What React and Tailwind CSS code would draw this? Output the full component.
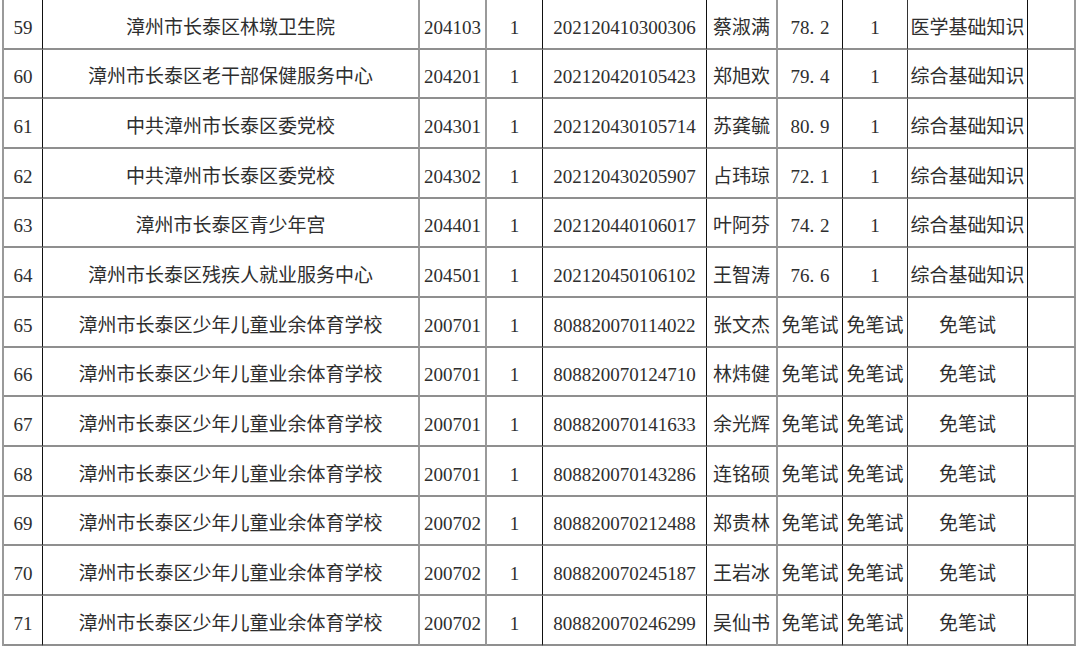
const rows = [
  ["59", "漳州市长泰区林墩卫生院", "204103", "1", "202120410300306", "蔡淑满", "78.2", "1", "医学基础知识"],
  ["60", "漳州市长泰区老干部保健服务中心", "204201", "1", "202120420105423", "郑旭欢", "79.4", "1", "综合基础知识"],
  ["61", "中共漳州市长泰区委党校", "204301", "1", "202120430105714", "苏龚毓", "80.9", "1", "综合基础知识"],
  ["62", "中共漳州市长泰区委党校", "204302", "1", "202120430205907", "占玮琼", "72.1", "1", "综合基础知识"],
  ["63", "漳州市长泰区青少年宫", "204401", "1", "202120440106017", "叶阿芬", "74.2", "1", "综合基础知识"],
  ["64", "漳州市长泰区残疾人就业服务中心", "204501", "1", "202120450106102", "王智涛", "76.6", "1", "综合基础知识"],
  ["65", "漳州市长泰区少年儿童业余体育学校", "200701", "1", "808820070114022", "张文杰", "免笔试", "免笔试", "免笔试"],
  ["66", "漳州市长泰区少年儿童业余体育学校", "200701", "1", "808820070124710", "林炜健", "免笔试", "免笔试", "免笔试"],
  ["67", "漳州市长泰区少年儿童业余体育学校", "200701", "1", "808820070141633", "余光辉", "免笔试", "免笔试", "免笔试"],
  ["68", "漳州市长泰区少年儿童业余体育学校", "200701", "1", "808820070143286", "连铭硕", "免笔试", "免笔试", "免笔试"],
  ["69", "漳州市长泰区少年儿童业余体育学校", "200702", "1", "808820070212488", "郑贵林", "免笔试", "免笔试", "免笔试"],
  ["70", "漳州市长泰区少年儿童业余体育学校", "200702", "1", "808820070245187", "王岩冰", "免笔试", "免笔试", "免笔试"],
  ["71", "漳州市长泰区少年儿童业余体育学校", "200702", "1", "808820070246299", "吴仙书", "免笔试", "免笔试", "免笔试"],
];

const borderR = [
  "border-r border-r-[#111]",
  "border-r-2 border-r-[#9a9a9a]",
  "border-r-2 border-r-[#9a9a9a]",
  "border-r border-r-[#111]",
  "border-r border-r-[#111]",
  "border-r-2 border-r-[#9a9a9a]",
  "border-r border-r-[#111]",
  "border-r border-r-[#333]",
  "border-r border-r-[#111]",
  "border-r-2 border-r-[#9a9a9a]",
];

function Score({ v }) {
  if (!v.includes(".")) return v;
  const [a, b] = v.split(".");
  return (
    <span>
      {a}
      <span className="inline-block w-[0.55em] text-left">.</span>
      {b}
    </span>
  );
}

export default function App() {
  return (
    <div className="w-[1080px] h-[649px] bg-white overflow-hidden">
      <div
        className="ml-[2px] w-[1074px] border-l-2 border-l-[#9a9a9a] grid grid-cols-[39px_377px_67px_56px_164px_71px_65px_65px_120px_48px] auto-rows-[49.67px] text-[19px] leading-none text-[#2e2e2e]"
        style={{ fontFamily: '"Liberation Serif", "Noto Sans CJK SC", serif' }}
      >
        {rows.map((r) =>
          [...r, ""].map((c, i) => (
            <div
              key={r[0] + "-" + i}
              className={`flex items-center justify-center whitespace-nowrap pt-[7px] border-b-2 border-b-[#8f8f8f] ${borderR[i]}`}
            >
              {i === 6 ? <Score v={c} /> : c}
            </div>
          ))
        )}
      </div>
    </div>
  );
}
